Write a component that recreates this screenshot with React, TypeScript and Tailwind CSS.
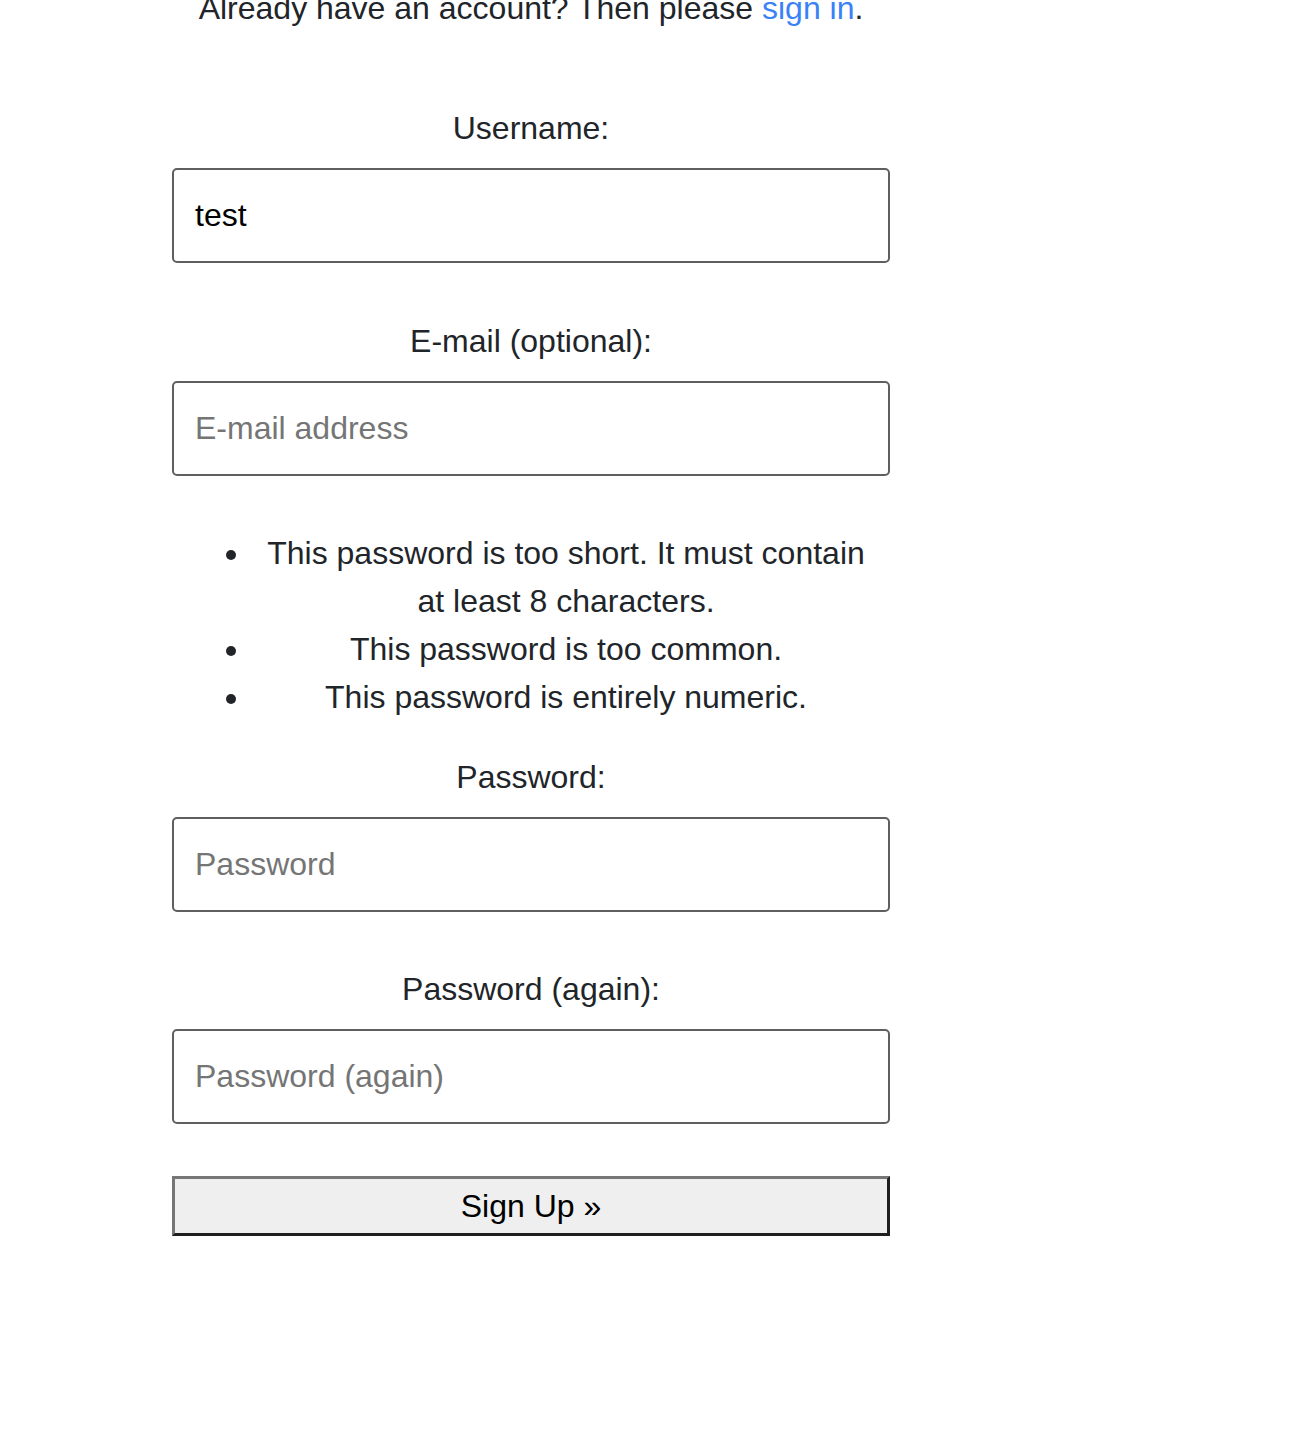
import React from "react";

const font = { fontFamily: '"Liberation Sans", Arial, sans-serif' };

function Field({ label, placeholder, value, type = "text", className = "" }: { label: string; placeholder?: string; value?: string; type?: string; className?: string }) {
  return (
    <div className={className}>
      <label className="block text-center text-[32px] leading-[48px] text-[#212529] mb-[16px]">{label}</label>
      <input
        type={type}
        defaultValue={value}
        placeholder={placeholder}
        className="block w-full h-[95px] border-2 border-[#5f5f5f] rounded-[5px] px-[21px] text-[32px] text-black placeholder:text-[#757575] bg-white outline-none"
        style={font}
      />
    </div>
  );
}

export default function App() {
  return (
    <div className="bg-white min-h-[1456px] overflow-hidden" style={font}>
      <div className="ml-[172px] w-[718px]">
        <p className="-mt-[16px] text-center text-[32px] leading-[48px] text-[#212529]">
          Already have an account? Then please <a href="#" className="text-[#3a82f6]">sign in</a>.
        </p>
        <form>
          <Field label="Username:" value="test" className="mt-[72px]" />
          <Field label="E-mail (optional):" placeholder="E-mail address" type="email" className="mt-[54px]" />
          <ul className="mt-[53px] list-disc pl-[80px] pr-[10px] text-center text-[32px] leading-[48px] text-[#212529]">
            <li>This password is too short. It must contain at least 8 characters.</li>
            <li>This password is too common.</li>
            <li>This password is entirely numeric.</li>
          </ul>
          <Field label="Password:" placeholder="Password" type="password" className="mt-[32px]" />
          <Field label="Password (again):" placeholder="Password (again)" type="password" className="mt-[53px]" />
          <button
            type="button"
            className="mt-[52px] block w-full h-[60px] bg-[#efefef] border-[3px] border-t-[#767676] border-l-[#767676] border-b-[#1f1f1f] border-r-[#1f1f1f] text-[32px] leading-[48px] text-black"
            style={font}
          >
            Sign Up »
          </button>
        </form>
      </div>
    </div>
  );
}
